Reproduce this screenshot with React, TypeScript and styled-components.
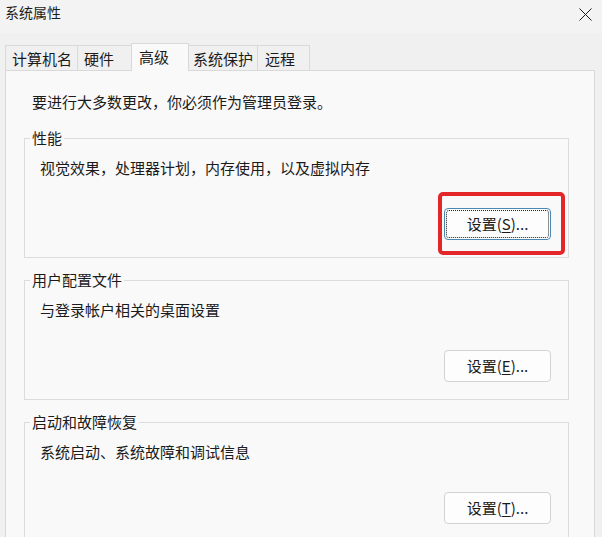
import React from "react";
import styled, { createGlobalStyle } from "styled-components";

const Global = createGlobalStyle`
  html, body { margin: 0; padding: 0; }
  body {
    width: 602px;
    height: 537px;
    overflow: hidden;
    background: #f0f0f0;
    font-family: "Noto Sans CJK SC", "Noto Sans", sans-serif;
    color: #1b1b1b;
  }
`;

const Window = styled.div`
  width: 602px;
  height: 537px;
  display: flex;
  flex-direction: column;
  overflow: hidden;
  background: #f0f0f0;
`;

const TitleBar = styled.div`
  height: 33px;
  flex: none;
  background: #f3f3f3;
  display: flex;
  align-items: flex-start;
  justify-content: space-between;
  padding: 2px 10px 0 5px;
  box-sizing: border-box;
`;

const Title = styled.span`
  font-size: 14px;
  line-height: 20px;
`;

const CloseButton = styled.div`
  width: 14px;
  height: 14px;
  margin-top: 5px;
  display: flex;
  align-items: center;
  justify-content: center;
`;

const Body = styled.div`
  flex: 1;
  display: flex;
  flex-direction: column;
  padding: 10px 7px 0 5px;
  min-height: 0;
`;

const TabStrip = styled.div`
  display: flex;
  align-items: flex-end;
  margin-bottom: -1px;
  position: relative;
  z-index: 1;
`;

const Tab = styled.div<{ $w: number; $active?: boolean; $pl?: number }>`
  box-sizing: border-box;
  width: ${(p) => p.$w}px;
  height: ${(p) => (p.$active ? 28 : 25)}px;
  margin-bottom: ${(p) => (p.$active ? 0 : 1)}px;
  padding: 3px 0 0 ${(p) => p.$pl ?? 6}px;
  border: 1px solid #d9d9d9;
  border-bottom: none;
  background: ${(p) => (p.$active ? "#f9f9f9" : "#f0f0f0")};
  font-size: 15px;
  line-height: 20px;
  white-space: nowrap;
  & + & { margin-left: -1px; }
  position: relative;
  z-index: ${(p) => (p.$active ? 2 : 1)};
`;

const Panel = styled.div`
  flex: 1;
  background: #f9f9f9;
  border: 1px solid #d9d9d9;
  border-bottom: none;
  padding: 21px 25px 0 18px;
  display: flex;
  flex-direction: column;
  min-height: 600px;
`;

const Intro = styled.div`
  font-size: 15px;
  line-height: 20px;
  padding-left: 8px;
  margin-bottom: 16px;
`;

const Group = styled.fieldset<{ $first?: boolean }>`
  margin: ${(p) => (p.$first ? 0 : 12)}px 0 0 0;
  padding: 0;
  border: 1px solid #dcdcdc;
  min-width: 0;
`;

const Legend = styled.legend`
  margin-left: 5px;
  padding: 0 2px;
  font-size: 15px;
  line-height: 20px;
`;

const GroupContent = styled.div`
  padding: 10px 17px 17px 15px;
  display: flex;
  flex-direction: column;
`;

const Description = styled.div`
  font-size: 15px;
  line-height: 20px;
`;

const ButtonRow = styled.div`
  display: flex;
  justify-content: flex-end;
  margin-top: 30px;
`;

const ButtonWrap = styled.div`
  position: relative;
`;

const Button = styled.button<{ $focused?: boolean }>`
  position: relative;
  box-sizing: border-box;
  width: 107px;
  height: 32px;
  border-radius: 4px;
  background: #fdfdfd;
  border: 1px solid ${(p) => (p.$focused ? "#4a87b3" : "#d3d3d3")};
  font-family: "Noto Sans CJK SC", "Noto Sans", sans-serif;
  font-size: 15px;
  line-height: 20px;
  color: #1b1b1b;
  padding: 0;
  display: flex;
  align-items: center;
  justify-content: center;
  ${(p) =>
    p.$focused
      ? `&::after {
    content: "";
    position: absolute;
    inset: 1px;
    border: 1px dotted #222;
    border-radius: 3px;
  }`
      : ""}
`;

const Mnemonic = styled.span`
  text-decoration: underline;
  text-underline-offset: 2px;
`;

const Highlight = styled.div`
  position: absolute;
  top: -16px;
  left: -6px;
  width: 127px;
  height: 63px;
  box-sizing: border-box;
  border: 4px solid #e2262a;
  border-radius: 5px;
  pointer-events: none;
`;

const tabs = [
  { label: "计算机名", w: 73 },
  { label: "硬件", w: 55 },
  { label: "高级", w: 58, active: true, pl: 7 },
  { label: "系统保护", w: 70, pl: 4 },
  { label: "远程", w: 53, pl: 7 },
];

const groups = [
  {
    title: "性能",
    desc: "视觉效果，处理器计划，内存使用，以及虚拟内存",
    key: "S",
    focused: true,
  },
  { title: "用户配置文件", desc: "与登录帐户相关的桌面设置", key: "E" },
  { title: "启动和故障恢复", desc: "系统启动、系统故障和调试信息", key: "T" },
];

export default function App() {
  return (
    <>
      <Global />
      <Window>
        <TitleBar>
          <Title>系统属性</Title>
          <CloseButton>
            <svg width="13" height="13" viewBox="0 0 13 13">
              <path d="M0.5 0.5 L12.5 12.5 M12.5 0.5 L0.5 12.5" stroke="#1b1b1b" strokeWidth="1" fill="none" />
            </svg>
          </CloseButton>
        </TitleBar>
        <Body>
          <TabStrip>
            {tabs.map((t) => (
              <Tab key={t.label} $w={t.w} $active={t.active} $pl={t.pl}>
                {t.label}
              </Tab>
            ))}
          </TabStrip>
          <Panel>
            <Intro>要进行大多数更改，你必须作为管理员登录。</Intro>
            {groups.map((g, i) => (
              <Group key={g.title} $first={i === 0}>
                <Legend>{g.title}</Legend>
                <GroupContent>
                  <Description>{g.desc}</Description>
                  <ButtonRow>
                    <ButtonWrap>
                      <Button $focused={g.focused}>
                        设置(<Mnemonic>{g.key}</Mnemonic>)...
                      </Button>
                      {g.focused && <Highlight />}
                    </ButtonWrap>
                  </ButtonRow>
                </GroupContent>
              </Group>
            ))}
          </Panel>
        </Body>
      </Window>
    </>
  );
}
